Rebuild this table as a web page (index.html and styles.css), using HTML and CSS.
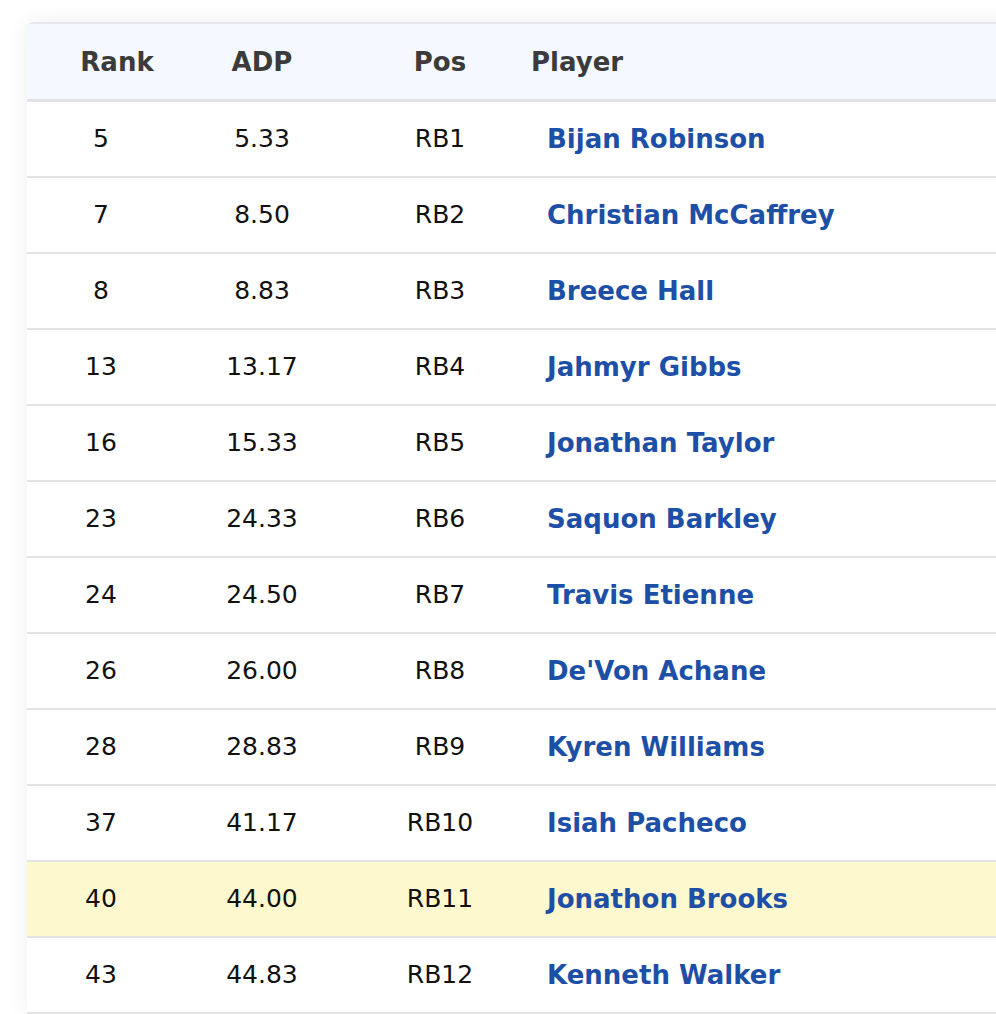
FILE: index.html
```html
<!DOCTYPE html>
<html lang="en">
<head>
<meta charset="utf-8">
<title>RB Rankings</title>
<link rel="stylesheet" href="styles.css">
</head>
<body>
<div class="card">
  <div class="row head">
    <div class="cell rank">Rank</div>
    <div class="cell adp">ADP</div>
    <div class="cell pos">Pos</div>
    <div class="cell player">Player</div>
  </div>
  <div class="row"><div class="cell rank">5</div><div class="cell adp">5.33</div><div class="cell pos">RB1</div><div class="cell player"><a class="name">Bijan Robinson</a></div></div>
  <div class="row"><div class="cell rank">7</div><div class="cell adp">8.50</div><div class="cell pos">RB2</div><div class="cell player"><a class="name">Christian McCaffrey</a></div></div>
  <div class="row"><div class="cell rank">8</div><div class="cell adp">8.83</div><div class="cell pos">RB3</div><div class="cell player"><a class="name">Breece Hall</a></div></div>
  <div class="row"><div class="cell rank">13</div><div class="cell adp">13.17</div><div class="cell pos">RB4</div><div class="cell player"><a class="name">Jahmyr Gibbs</a></div></div>
  <div class="row"><div class="cell rank">16</div><div class="cell adp">15.33</div><div class="cell pos">RB5</div><div class="cell player"><a class="name">Jonathan Taylor</a></div></div>
  <div class="row"><div class="cell rank">23</div><div class="cell adp">24.33</div><div class="cell pos">RB6</div><div class="cell player"><a class="name">Saquon Barkley</a></div></div>
  <div class="row"><div class="cell rank">24</div><div class="cell adp">24.50</div><div class="cell pos">RB7</div><div class="cell player"><a class="name">Travis Etienne</a></div></div>
  <div class="row"><div class="cell rank">26</div><div class="cell adp">26.00</div><div class="cell pos">RB8</div><div class="cell player"><a class="name">De'Von Achane</a></div></div>
  <div class="row"><div class="cell rank">28</div><div class="cell adp">28.83</div><div class="cell pos">RB9</div><div class="cell player"><a class="name">Kyren Williams</a></div></div>
  <div class="row"><div class="cell rank">37</div><div class="cell adp">41.17</div><div class="cell pos">RB10</div><div class="cell player"><a class="name">Isiah Pacheco</a></div></div>
  <div class="row hl"><div class="cell rank">40</div><div class="cell adp">44.00</div><div class="cell pos">RB11</div><div class="cell player"><a class="name">Jonathon Brooks</a></div></div>
  <div class="row"><div class="cell rank">43</div><div class="cell adp">44.83</div><div class="cell pos">RB12</div><div class="cell player"><a class="name">Kenneth Walker</a></div></div>
</div>
</body>
</html>
```

FILE: styles.css
```css
html, body {
  margin: 0;
  padding: 0;
  background: #ffffff;
  overflow: hidden;
}
body {
  padding: 22px 0 0 27px;
  font-family: "DejaVu Sans", "Open Sans", sans-serif;
  color: #111111;
}
.card {
  width: 1000px;
  background: #ffffff;
  border-top: 2px solid #e6e8ec;
  border-top-left-radius: 6px;
  box-shadow: 0 0 22px rgba(0, 0, 0, 0.07);
}
.row {
  display: grid;
  grid-template-columns: 148px 174px 182px 1fr;
  height: 74px;
  align-items: center;
  border-bottom: 2px solid #e3e3e5;
  font-size: 25px;
  line-height: 30px;
}
.row.head {
  height: 75px;
  background: #f5f9ff;
  font-size: 26px;
  font-weight: 700;
  color: #3b3b3b;
  border-bottom-width: 3px;
}
.row.hl {
  background: #fef8cf;
}
.cell {
  text-align: center;
}
.head .rank {
  padding-left: 32px;
}
.cell.player {
  text-align: left;
}
.name {
  padding-left: 16px;
  font-size: 26px;
  font-weight: 700;
  color: #1e4fa6;
  text-decoration: none;
}
```
